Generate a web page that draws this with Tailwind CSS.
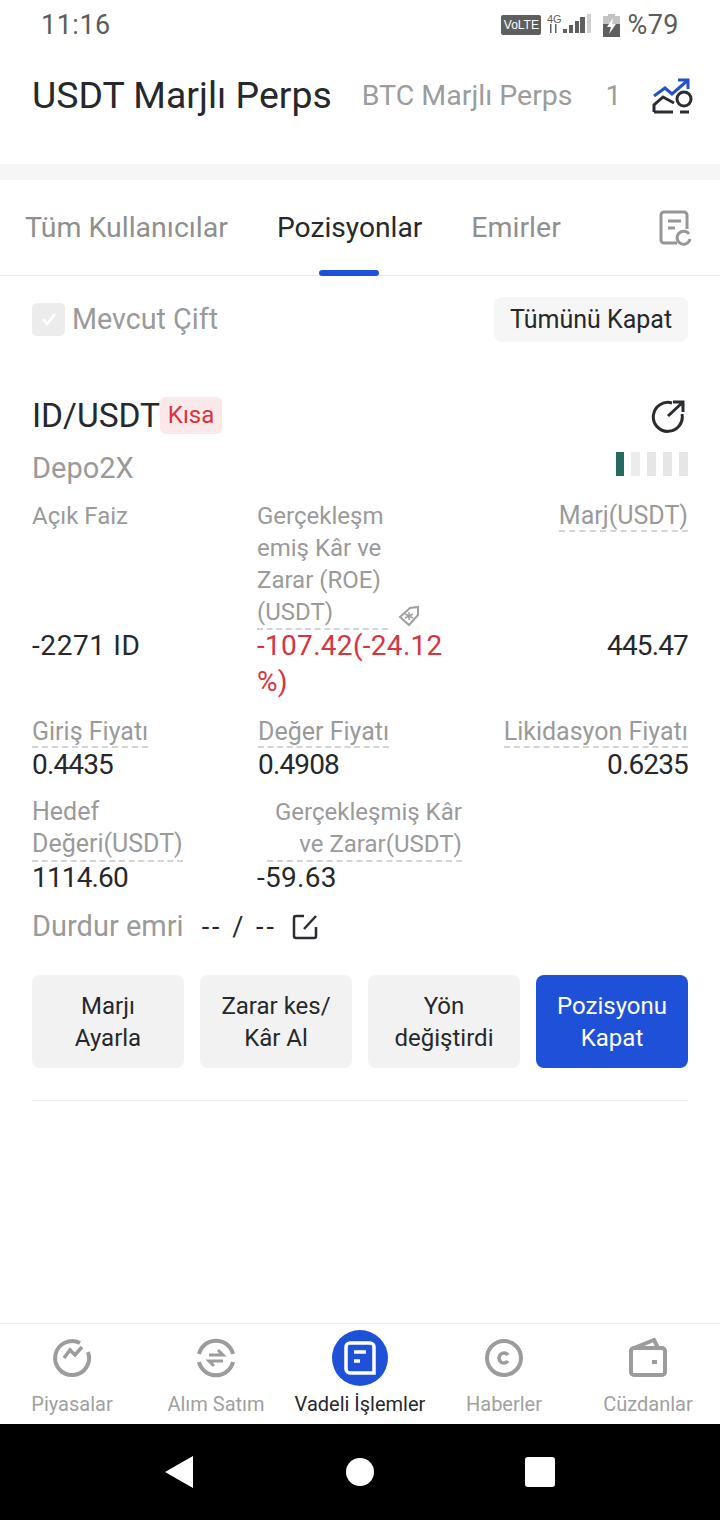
<!DOCTYPE html>
<html lang="en">

<head>
    <meta charset="UTF-8" />
    <meta name="viewport" content="width=device-width, initial-scale=1.0" />
    <title>USDT Marjlı Perps</title>
    <script src="https://cdn.jsdelivr.net/npm/@tailwindcss/browser@4"></script>
</head>

<body class="bg-white">
    <div class="w-[720px] h-[1520px] flex flex-col bg-white font-['Roboto',sans-serif] text-[#26282c] overflow-hidden">

        <!-- Status bar -->
        <div class="h-[50px] flex items-center justify-between pl-[41px] pr-[41px] text-[#5c5c5c]">
            <span class="text-[27px] tracking-[0.5px]">11:16</span>
            <div class="flex items-center">
                <span class="w-[40px] h-[20px] bg-[#5f5f5f] rounded-[2px] text-white text-[12px] leading-[20px] text-center font-['Liberation_Sans',sans-serif]">VoLTE</span>
                <svg class="w-[54px] h-[24px] ml-[5px]" viewBox="0 0 54 24" fill="#5f5f5f">
                    <text x="1" y="10" font-size="11" font-family="Liberation Sans">4G</text>
                    <path d="M4 11h1.500v9H4zM9 11h1.500v9H9z" />
                    <rect x="17" y="16" width="4" height="4" />
                    <rect x="23" y="12" width="4" height="8" />
                    <rect x="29" y="8" width="4" height="12" />
                    <rect x="34" y="4" width="5" height="16" />
                    <rect x="41" y="1" width="4" height="19" fill="#d0d0d0" />
                </svg>
                <svg class="w-[17px] h-[24px] ml-[3px]" viewBox="0 0 17 24">
                    <rect x="5" y="1" width="7" height="3" fill="#c4c4c4" />
                    <rect x="0" y="3" width="17" height="8" fill="#c4c4c4" />
                    <rect x="0" y="11" width="17" height="13" fill="#5f5f5f" />
                    <path d="M10 5 4 14h4l-2 7 7-10H9z" fill="#fff" />
                </svg>
                <span class="text-[27px] ml-[7px] tracking-[0.5px]">%79</span>
            </div>
        </div>

        <!-- Header -->
        <div class="h-[114px] flex items-center pl-[32px] pr-[26px] pb-[22px]">
            <span class="text-[37.400px] font-normal leading-none whitespace-nowrap">USDT Marjlı Perps</span>
            <span class="text-[28.500px] text-[#9c9c9c] ml-[30px] whitespace-nowrap">BTC Marjlı Perps</span>
            <span class="text-[28px] text-[#9c9c9c] ml-[33px]">1</span>
            <svg class="w-[42px] h-[40px] ml-auto" viewBox="0 0 42 40" fill="none" stroke-width="3">
                <path d="M2 20 13 12l7 6L35 5" stroke="#2451c9" />
                <path d="M26 4h10v9" stroke="#2451c9" />
                <path d="M2 36v-7l9-8 11 6" stroke="#2a2c30" />
                <path d="M2 36h19" stroke="#2a2c30" />
                <circle cx="32" cy="23" r="7" stroke="#2a2c30" />
                <path d="M28 36h9" stroke="#2a2c30" />
            </svg>
        </div>

        <div class="h-[16px] bg-[#f6f6f6]"></div>

        <!-- Tabs -->
        <div class="relative h-[96px] flex items-center border-b border-[#eaeaea] pl-[25px] pr-[27px] pt-[2px]">
            <span class="text-[28.500px] text-[#8f8f8f]">Tüm Kullanıcılar</span>
            <span class="text-[28.200px] ml-[49px]">Pozisyonlar</span>
            <span class="text-[28.500px] text-[#8f8f8f] ml-[49px]">Emirler</span>
            <svg class="w-[34px] h-[36px] ml-auto -mt-[2px]" viewBox="0 0 34 36" fill="none" stroke="#969696" stroke-width="3">
                <path d="M18 33H5a3 3 0 0 1-3-3V5a3 3 0 0 1 3-3h20a3 3 0 0 1 3 3v14" />
                <path d="M9 11h13M9 18h7" />
                <path d="M30 24a6.500 6.500 0 1 0 1 5" />
            </svg>
            <div class="absolute left-[319px] bottom-[-1px] w-[60px] h-[6px] rounded-full bg-[#1f51d8]"></div>
        </div>

        <!-- Filter row -->
        <div class="flex items-center justify-between pl-[32px] pr-[32px] mt-[21px]">
            <div class="flex items-center">
                <span class="w-[33px] h-[33px] rounded-[5px] bg-[#ececec] flex items-center justify-center">
                    <svg class="w-[20px] h-[20px]" viewBox="0 0 20 20" fill="none" stroke="#fff" stroke-width="2.500">
                        <path d="m4 10 4 5 8-10" />
                    </svg>
                </span>
                <span class="text-[28.700px] text-[#9a9a9a] ml-[7px]">Mevcut Çift</span>
            </div>
            <button class="w-[194px] h-[45px] rounded-[8px] bg-[#f6f6f6] text-[25px]">Tümünü Kapat</button>
        </div>

        <!-- Position card -->
        <div class="px-[32px] mt-[55px]">
            <div class="flex items-center justify-between h-[37px]">
                <div class="flex items-center">
                    <span class="text-[33.500px] whitespace-nowrap pt-[1px]">ID/USDT</span>
                    <span class="w-[62px] h-[37px] text-center rounded-[6px] bg-[#fbe8e8] text-[#d8333f] text-[24px] leading-[37px]">Kısa</span>
                </div>
                <svg class="w-[34px] h-[34px] mr-[3px]" viewBox="0 0 34 34" fill="none" stroke="#2a2c30" stroke-width="3">
                    <path d="M21 4a14.500 14.500 0 1 0 10 11" />
                    <path d="M17 17 31 4M22 3h10v10" />
                </svg>
            </div>
            <div class="flex items-center justify-between mt-[17px] h-[36px]">
                <span class="text-[29px] text-[#9a9a9a]">Depo2X</span>
                <div class="flex gap-[7px] -mt-[10px]">
                    <span class="w-[8px] h-[24px] bg-[#256b5d]"></span>
                    <span class="w-[9px] h-[24px] bg-[#ececec]"></span>
                    <span class="w-[9px] h-[24px] bg-[#e6e6e6]"></span>
                    <span class="w-[9px] h-[24px] bg-[#e6e6e6]"></span>
                    <span class="w-[9px] h-[24px] bg-[#e6e6e6]"></span>
                </div>
            </div>

            <!-- Stats -->
            <div class="grid grid-cols-[225px_195px_1fr] mt-[13px] text-[25px] leading-[32px] text-[#9a9a9a]">
                <div class="text-[24px]">Açık Faiz</div>
                <div class="relative">
                    <span class="block w-[131px] text-[24px] border-b-2 border-dashed border-[#d4d4d4]">Gerçekleşm emiş Kâr ve Zarar (ROE) (USDT)</span>
                    <svg class="absolute left-[140px] top-[104px] w-[24px] h-[24px]" viewBox="0 0 24 24" fill="none" stroke="#a0a0a0" stroke-width="2">
                        <path d="M3 13 13 4l8-1 0 8-9 10z" />
                        <path d="M12 8v8M8 10l8 4M16 10l-8 4" stroke-width="1.500" />
                    </svg>
                </div>
                <div class="text-right"><span class="border-b-2 border-dashed border-[#d4d4d4]">Marj(USDT)</span></div>

                <div class="text-[28px] leading-[36px] text-[#26282c] -mt-[2px] tracking-[0.6px]">-2271 ID</div>
                <div class="text-[28px] leading-[36px] text-[#d8333f] -mt-[2px] tracking-[0.3px]">-107.42(-24.12 %)</div>
                <div class="text-[28px] leading-[36px] text-[#26282c] text-right -mt-[2px] tracking-[-0.85px]">445.47</div>

                <div class="mt-[16px]"><span class="border-b-2 border-dashed border-[#d4d4d4]">Giriş Fiyatı</span></div>
                <div class="mt-[16px] pl-[1px]"><span class="border-b-2 border-dashed border-[#d4d4d4]">Değer Fiyatı</span></div>
                <div class="mt-[16px] text-right whitespace-nowrap"><span class="border-b-2 border-dashed border-[#d4d4d4]">Likidasyon Fiyatı</span></div>

                <div class="text-[28px] leading-[34px] text-[#26282c] tracking-[-0.85px]">0.4435</div>
                <div class="text-[28px] leading-[34px] text-[#26282c] pl-[1px] tracking-[-0.85px]">0.4908</div>
                <div class="text-[28px] leading-[34px] text-[#26282c] text-right tracking-[-0.85px]">0.6235</div>

                <div class="mt-[14px]"><span class="inline-block border-b-2 border-dashed border-[#d4d4d4]">Hedef<br />Değeri(USDT)</span></div>
                <div class="mt-[14px] col-span-2"><span class="inline-block ml-[10px] text-right text-[24px] border-b-2 border-dashed border-[#d4d4d4] pl-[8px]">Gerçekleşmiş Kâr<br />ve Zarar(USDT)</span></div>

                <div class="text-[28px] leading-[34px] text-[#26282c] -mt-[1px] tracking-[-0.85px]">1114.60</div>
                <div class="text-[28px] leading-[34px] text-[#26282c] col-span-2 -mt-[1px] tracking-[0.3px]">-59.63</div>
            </div>

            <!-- Stop order -->
            <div class="flex items-center mt-[14px] h-[36px]">
                <span class="text-[29px] text-[#9a9a9a]">Durdur emri</span>
                <span class="text-[27px] ml-[18px] tracking-[3px]">-- / --</span>
                <svg class="w-[26px] h-[26px] ml-[15px]" viewBox="0 0 26 26" fill="none" stroke="#2a2c30" stroke-width="2.500">
                    <path d="M12 2H4a2 2 0 0 0-2 2v18a2 2 0 0 0 2 2h18a2 2 0 0 0 2-2v-9" />
                    <path d="M12 15 24 2" />
                </svg>
            </div>

            <!-- Actions -->
            <div class="grid grid-cols-4 gap-[16px] mt-[30px] text-[24px] leading-[32px] text-center">
                <button class="h-[93px] rounded-[8px] bg-[#f2f2f2]">Marjı<br />Ayarla</button>
                <button class="h-[93px] rounded-[8px] bg-[#f2f2f2]">Zarar kes/<br />Kâr Al</button>
                <button class="h-[93px] rounded-[8px] bg-[#f2f2f2]">Yön<br />değiştirdi</button>
                <button class="h-[93px] rounded-[8px] bg-[#1f51d8] text-white">Pozisyonu<br />Kapat</button>
            </div>
            <div class="h-px bg-[#eeeeee] mt-[32px]"></div>
        </div>

        <div class="flex-1"></div>

        <!-- Bottom nav -->
        <div class="h-[101px] border-t border-[#eeeeee] grid grid-cols-5 text-[20px] text-[#a0a0a0] text-center">
            <div class="flex flex-col items-center pt-[6px]">
                <svg class="w-[56px] h-[56px]" viewBox="0 0 56 56" fill="none" stroke="#9c9c9c" stroke-width="4">
                    <path d="M36 13a17 17 0 1 0 8 9" />
                    <path d="m20 28 6-8 5 5 7-8" stroke-width="3.500" />
                </svg>
                <span class="mt-[3px]">Piyasalar</span>
            </div>
            <div class="flex flex-col items-center pt-[6px]">
                <svg class="w-[56px] h-[56px]" viewBox="0 0 56 56" fill="none" stroke="#9c9c9c" stroke-width="4">
                    <path d="M11 24a17.500 17.500 0 0 1 34 0M45 32a17.500 17.500 0 0 1-34 0" />
                    <path d="M21 25h14l-5-5M35 31H21l5 5" stroke-width="3" />
                </svg>
                <span class="mt-[3px]">Alım Satım</span>
            </div>
            <div class="flex flex-col items-center pt-[6px]">
                <div class="w-[56px] h-[56px] rounded-full bg-[#1f51d8] flex items-center justify-center">
                    <svg class="w-[32px] h-[34px]" viewBox="0 0 32 34" fill="none" stroke="#fff" stroke-width="3.500">
                        <path d="M30 32H6a4 4 0 0 1-4-4V6a4 4 0 0 1 4-4h20a4 4 0 0 1 4 4z" />
                        <path d="M10 11h12M10 20h6" />
                    </svg>
                </div>
                <span class="mt-[3px] text-[#26282c] whitespace-nowrap">Vadeli İşlemler</span>
            </div>
            <div class="flex flex-col items-center pt-[6px]">
                <svg class="w-[56px] h-[56px]" viewBox="0 0 56 56" fill="none" stroke="#9c9c9c" stroke-width="4">
                    <circle cx="28" cy="28" r="17" />
                    <path d="M32 25a5 5 0 1 0 0 6" stroke-width="3.500" />
                </svg>
                <span class="mt-[3px]">Haberler</span>
            </div>
            <div class="flex flex-col items-center pt-[6px]">
                <svg class="w-[56px] h-[56px]" viewBox="0 0 56 56" fill="none" stroke="#9c9c9c" stroke-width="4">
                    <path d="M11 42V21a3 3 0 0 1 3-3h28a3 3 0 0 1 3 3v21a3 3 0 0 1-3 3H14a3 3 0 0 1-3-3z" />
                    <path d="m14 18 20-8 4 8" />
                    <path d="M32 32h5" />
                </svg>
                <span class="mt-[3px]">Cüzdanlar</span>
            </div>
        </div>

        <!-- Android nav -->
        <div class="h-[96px] bg-black flex items-center justify-center gap-[151px]">
            <svg class="w-[30px] h-[34px]" viewBox="0 0 30 34" fill="#fff">
                <path d="M28 1v32L0 17z" />
            </svg>
            <div class="w-[28px] h-[28px] rounded-full bg-white"></div>
            <div class="w-[30px] h-[30px] rounded-[3px] bg-white"></div>
        </div>
    </div>
</body>

</html>
